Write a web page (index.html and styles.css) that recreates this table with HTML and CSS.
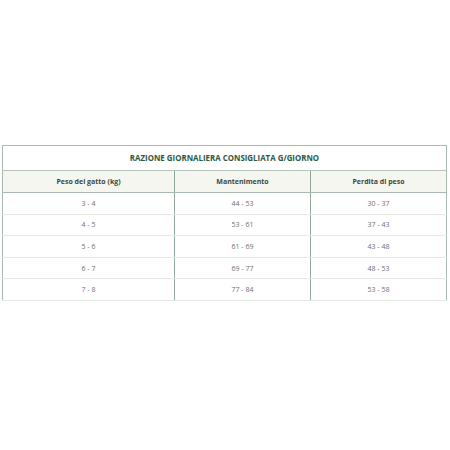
FILE: index.html
```html
<!DOCTYPE html>
<html lang="it">
<head>
<meta charset="utf-8">
<link rel="stylesheet" href="styles.css">
</head>
<body>
<div class="wrap">
<table class="ration">
  <colgroup><col class="c1"><col class="c2"><col class="c3"></colgroup>
  <tr class="title-row"><th colspan="3">RAZIONE GIORNALIERA CONSIGLIATA G/GIORNO</th></tr>
  <tr class="head-row"><th>Peso del gatto (kg)</th><th>Mantenimento</th><th>Perdita di peso</th></tr>
  <tr><td>3 - 4</td><td>44 - 53</td><td>30 - 37</td></tr>
  <tr><td>4 - 5</td><td>53 - 61</td><td>37 - 43</td></tr>
  <tr><td>5 - 6</td><td>61 - 69</td><td>43 - 48</td></tr>
  <tr><td>6 - 7</td><td>69 - 77</td><td>48 - 53</td></tr>
  <tr><td>7 - 8</td><td>77 - 84</td><td>53 - 58</td></tr>
</table>
</div>
</body>
</html>
```
FILE: styles.css
```css
html, body { margin: 0; padding: 0; background: #fff; }
.wrap { padding: 145px 0 0 2px; width: 445px; }
.ration {
  width: 445px;
  border-collapse: collapse;
  font-family: "Open Sans", "Liberation Sans", sans-serif;
  table-layout: fixed;
}
.c1 { width: 172px; }
.c2 { width: 136px; }
.c3 { width: auto; }
.ration th, .ration td {
  text-align: center;
  padding: 0;
}
.title-row th {
  height: 24px;
  font-size: 7.9px;
  font-weight: 700;
  color: #2b5a42;
  border: 1.5px solid #a9b9b0;
  border-bottom: 1px solid #b7c4bc;
}
.head-row th {
  height: 21px;
  font-size: 7px;
  font-weight: 700;
  color: #3b4a42;
  background: #f5f6f0;
  border-bottom: 1px solid #a9b9b0;
}
.head-row th:first-child { border-left: 1.5px solid #a9b9b0; }
.head-row th:nth-child(2) { border-left: 1px solid #8fa89a; border-right: 1px solid #8fa89a; }
.head-row th:last-child { border-right: 1.5px solid #a9b9b0; }
.ration td {
  height: 20.6px;
  font-size: 7px;
  color: #6f6f6f;
  border-bottom: 1px solid #e6e8e6;
}
.ration td:first-child { border-left: 1.5px solid #a9b9b0; }
.ration td:nth-child(2) { border-left: 1px solid #8fa89a; border-right: 1px solid #8fa89a; }
.ration td:last-child { border-right: 1.5px solid #a9b9b0; }
```
